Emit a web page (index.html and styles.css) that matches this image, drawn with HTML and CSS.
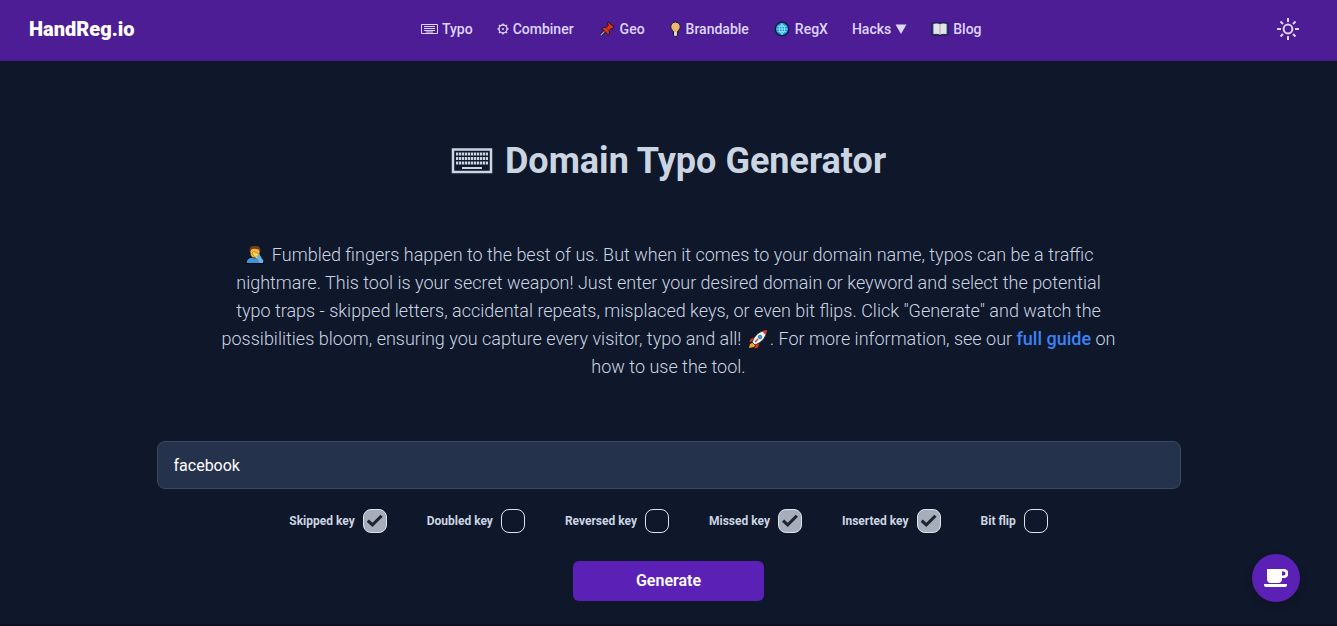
FILE: index.html
```
<!DOCTYPE html>
<html lang="en">
<head>
  <meta charset="UTF-8">
  <meta name="viewport" content="width=device-width, initial-scale=1">
  <title>Domain Typo Generator</title>
  <link rel="stylesheet" href="styles.css">
</head>
<body>
  <header class="navbar">
    <a class="logo" href="#">HandReg.io</a>
    <nav class="menu">
      <a href="#">
        <svg class="icon-wide" viewBox="0 0 17 12" fill="none" stroke="currentColor" aria-hidden="true">
          <path d="M.5 1.500h16v9H.5zM3 3.500h11M3 5.500h11M3 7.500h11M5 9h7"/>
        </svg>
        Typo
      </a>
      <a href="#">
        <svg class="icon-gear" viewBox="0 0 12 12" fill="none" stroke="currentColor" aria-hidden="true">
          <circle cx="6" cy="6" r="4" stroke-width="1.400"/>
          <circle cx="6" cy="6" r="1" fill="currentColor" stroke="none"/>
          <path stroke-width="1.400" d="M6 .5V2M6 10v1.500M.5 6H2M10 6h1.500M2 2l1.200 1.200M8.800 8.800 10 10M2 10l1.200-1.200M8.800 3.200 10 2"/>
        </svg>
        Combiner
      </a>
      <a href="#">
        <svg class="icon-emoji" viewBox="0 0 18 18" aria-hidden="true">
          <path d="M2 16 8 10" stroke="#111" stroke-width="3"/>
          <path d="M2 16 8 10" stroke="#a9a9b5" stroke-width="1.500"/>
          <path d="M10.500 1 17 7l-1.500 1.500-1.500-.3-2.500 2.600.3 3.200-1.500 1.500L3.500 8.700 5 7.200l3 .2 2.500-2.500-.8-2.200z" fill="#dc3518" stroke="#111"/>
          <path d="m8 7.500 3.500 3.500" stroke="#8e1e10"/>
        </svg>
        Geo
      </a>
      <a href="#">
        <svg class="icon-bulb" viewBox="0 0 12 16" aria-hidden="true">
          <path d="M6 1a4.700 4.700 0 0 0-3 8.400L4 11v3l1 1.200h2L8 14v-3l1-1.600A4.700 4.700 0 0 0 6 1z" fill="#e9b872" stroke="#1a1423"/>
          <path d="M4.500 11h3v3l-.7.800H5.200l-.7-.8z" fill="#d8d8de"/>
        </svg>
        Brandable
      </a>
      <a href="#">
        <svg class="icon-emoji" viewBox="0 0 18 18" aria-hidden="true">
          <circle cx="9" cy="9" r="7.600" fill="#159bd7" stroke="#111b30" stroke-width="1.400"/>
          <path d="M9 3v12M3 9h12M4 6h10M4 12h10M9 3C5 6 5 12 9 15M9 3c4 3 4 9 0 12" fill="none" stroke="#a7e4fb" stroke-width="1"/>
        </svg>
        RegX
      </a>
      <a href="#">Hacks
        <svg class="icon-arrow" viewBox="0 0 11 10" aria-hidden="true"><path d="M0 .5h11L5.500 10z" fill="currentColor"/></svg>
      </a>
      <a href="#">
        <svg class="icon-emoji" viewBox="0 0 18 16" aria-hidden="true">
          <path d="M1 2h16v12h-7l-1 1-1-1H1z" fill="#3b5f8c" stroke="#111b30"/>
          <path d="M2.500 3q4.500-1 6.500.5Q11 2 15.500 3v10q-4.500-.5-6.500.5-2-1-6.500-.5z" fill="#e5e4ea"/>
          <path d="M9 3.500v10" stroke="#a3a5b4"/>
        </svg>
        Blog
      </a>
    </nav>
    <button class="theme-toggle" type="button" aria-label="Toggle theme">
      <svg viewBox="0 0 24 24" fill="none" stroke="currentColor" stroke-width="2" aria-hidden="true">
        <circle cx="12" cy="12" r="4.400"/>
        <path d="M12 1v4M12 19v4M1 12h4M19 12h4M4.500 4.500l2.500 2.500M17 17l2.500 2.500M4.500 19.500 7 17M17 7l2.500-2.500"/>
      </svg>
    </button>
  </header>

  <main class="tool">
    <h1>
      <svg class="keyboard" viewBox="0 0 42 26" fill="none" stroke="currentColor" aria-hidden="true">
        <path d="M2 1.500h38v22.500H2z" stroke-width="2.500"/>
        <path d="M5 6h32M5 10.500h32M5 15h32" stroke-width="3" stroke-dasharray="2.300 .7"/>
        <path d="M11 20h20" stroke-width="2"/>
      </svg>
      Domain Typo Generator
    </h1>

    <p class="intro">
      <svg class="emoji" viewBox="0 0 20 20" aria-hidden="true">
        <path d="M1 18.500q0-5.500 6-6.500h5q6 1 7 6.500z" fill="#3f91d8" stroke="#080808"/>
        <path d="M5 7Q4 1 10 1t5 6q0 6-5 6T5 7z" fill="#f5b83d" stroke="#111" stroke-width=".7"/>
        <path d="M4.800 7Q3.500 1 10 1t5.300 6L13.500 4.500Q8 3 6.500 4.500z" fill="#70401f"/>
        <path d="M7 8q1-2 3-1l4 2 1 4-3 1-4-4z" fill="#ffcf54" stroke="#a8661c" stroke-width=".6"/>
        <path d="m11.500 11 3-1.500 4 6.500-1 2h-3z" fill="#66b2ef"/>
      </svg>
      Fumbled fingers happen to the best of us. But when it comes to your domain name, typos can be a traffic nightmare. This tool is your secret weapon! Just enter your desired domain or keyword and select the potential typo traps - skipped letters, accidental repeats, misplaced keys, or even bit flips. Click "Generate" and watch the possibilities bloom, ensuring you capture every visitor, typo and all!
      <svg class="emoji" viewBox="0 0 20 20" aria-hidden="true">
        <path d="M6 8 2 10l-1 4 5-2zM12 14l-2 5-4 1 2-6z" fill="#d83824" stroke="#111" stroke-width=".7"/>
        <path d="m2 15 4-2 2 2-2 3-5 1z" fill="#f7a428"/>
        <path d="M4 13Q8 2 19 1q-1 11-12 15z" fill="#edf3f8" stroke="#111" stroke-width=".8"/>
        <path d="M14 2.300 19 1l-1.400 5z" fill="#e23a2c"/>
        <circle cx="12" cy="8" r="1.800" fill="#2ba4e2" stroke="#35536b" stroke-width=".7"/>
        <path d="m7 13 3-3" stroke="#d83824" stroke-width="1.500"/>
      </svg>. For more information, see our <a href="#">full guide</a> on how to use the tool.
    </p>

    <form class="generator">
      <input class="keyword" type="text" value="facebook" aria-label="Domain or keyword">
      <div class="options">
        <label>Skipped key <input type="checkbox" checked></label>
        <label>Doubled key <input type="checkbox"></label>
        <label>Reversed key <input type="checkbox"></label>
        <label>Missed key <input type="checkbox" checked></label>
        <label>Inserted key <input type="checkbox" checked></label>
        <label>Bit flip <input type="checkbox"></label>
      </div>
      <button class="generate" type="button">Generate</button>
    </form>
  </main>

  <footer class="footer"></footer>

  <a class="coffee" href="#" aria-label="Buy me a coffee">
    <svg viewBox="0 0 24 18" fill="currentColor" aria-hidden="true">
      <path d="M3 0h17a4.500 4.500 0 0 1 0 9h-2v1a4 4 0 0 1-4 4H7a4 4 0 0 1-4-4zm15 2.500v4h1.500a2 2 0 0 0 0-4z"/>
      <path d="M0 15h23v1a2 2 0 0 1-2 2H2a2 2 0 0 1-2-2z"/>
    </svg>
  </a>
</body>
</html>
```
FILE: styles.css
```
* {
  box-sizing: border-box;
}
body {
  margin: 0;
  font-family: Roboto, sans-serif;
  background: #0f172a;
  color: #cbd5e1;
}
a {
  color: inherit;
  text-decoration: none;
}
.navbar {
  display: flex;
  align-items: center;
  justify-content: space-between;
  padding: 7px 29px 9px;
  background: #4c1d95;
  border-bottom: 1px solid #46198d;
}
.logo {
  color: #fff;
  font-size: 20px;
  font-weight: 900;
}
.menu {
  display: flex;
  gap: 24px;
  font-size: 14px;
  font-weight: 500;
  color: #ddd6fe;
}
.menu a {
  display: flex;
  align-items: center;
  gap: 4px;
  line-height: 20px;
}
.icon-wide {
  width: 17px;
  height: 12px;
}
.icon-gear {
  width: 12px;
  height: 12px;
}
.icon-emoji {
  width: 18px;
  height: 16px;
}
.icon-bulb {
  width: 13px;
  height: 16px;
}
.icon-arrow {
  width: 12px;
  height: 10px;
}
.theme-toggle {
  display: flex;
  padding: 10px 8px;
  border: 0;
  background: none;
  color: #ddd6fe;
}
.theme-toggle svg {
  width: 24px;
  height: 24px;
}
.tool {
  max-width: 1024px;
  margin: 0 auto;
  padding: 80px 0 23px;
}
h1 {
  display: flex;
  align-items: center;
  justify-content: center;
  gap: 12px;
  margin: 0;
  font-size: 36px;
  font-weight: 700;
  line-height: 40px;
}
.keyboard {
  width: 42px;
  height: 26px;
}
.intro {
  max-width: 900px;
  margin: 60px auto;
  font-size: 18px;
  font-weight: 300;
  line-height: 28px;
  text-align: center;
}
.intro a {
  color: #3b82f6;
  font-weight: 500;
}
.emoji {
  width: 24px;
  height: 20px;
  vertical-align: -4px;
}
.keyword {
  display: block;
  width: 100%;
  height: 48px;
  padding: 0 16px;
  border: 1px solid #3b4860;
  border-radius: 8px;
  background: #25324b;
  color: #fff;
  font: 400 16px Roboto, sans-serif;
}
.options {
  display: flex;
  justify-content: center;
  gap: 40px;
  margin: 20px 0 28px;
}
.options label {
  display: flex;
  align-items: center;
  gap: 8px;
  font-size: 12px;
  font-weight: 700;
}
.options input {
  appearance: none;
  width: 24px;
  height: 24px;
  margin: 0;
  border: 1px solid #dde3ed;
  border-radius: 8px;
}
.options input:checked {
  display: grid;
  place-items: center;
  background: #a6adbb;
}
.options input:checked::before {
  content: "";
  width: 16px;
  height: 14px;
  background: #1f2630;
  clip-path: polygon(0 55%, 14% 40%, 36% 62%, 86% 6%, 100% 20%, 36% 92%);
}
.generate {
  display: block;
  width: 191px;
  margin: 0 auto;
  padding: 0;
  border: 0;
  border-radius: 6px;
  background: #5b21b6;
  color: #fff;
  font: 600 16px/40px Roboto, sans-serif;
}
.footer {
  height: 2px;
  background: #0c1020;
}
.coffee {
  position: fixed;
  right: 37px;
  bottom: 24px;
  display: flex;
  align-items: center;
  justify-content: center;
  width: 48px;
  height: 48px;
  border-radius: 50%;
  background: #5b21b6;
  color: #fff;
  box-shadow: 0 4px 8px rgba(0, 0, 0, 0.15);
}
.coffee svg {
  width: 24px;
  height: 18px;
}
```
